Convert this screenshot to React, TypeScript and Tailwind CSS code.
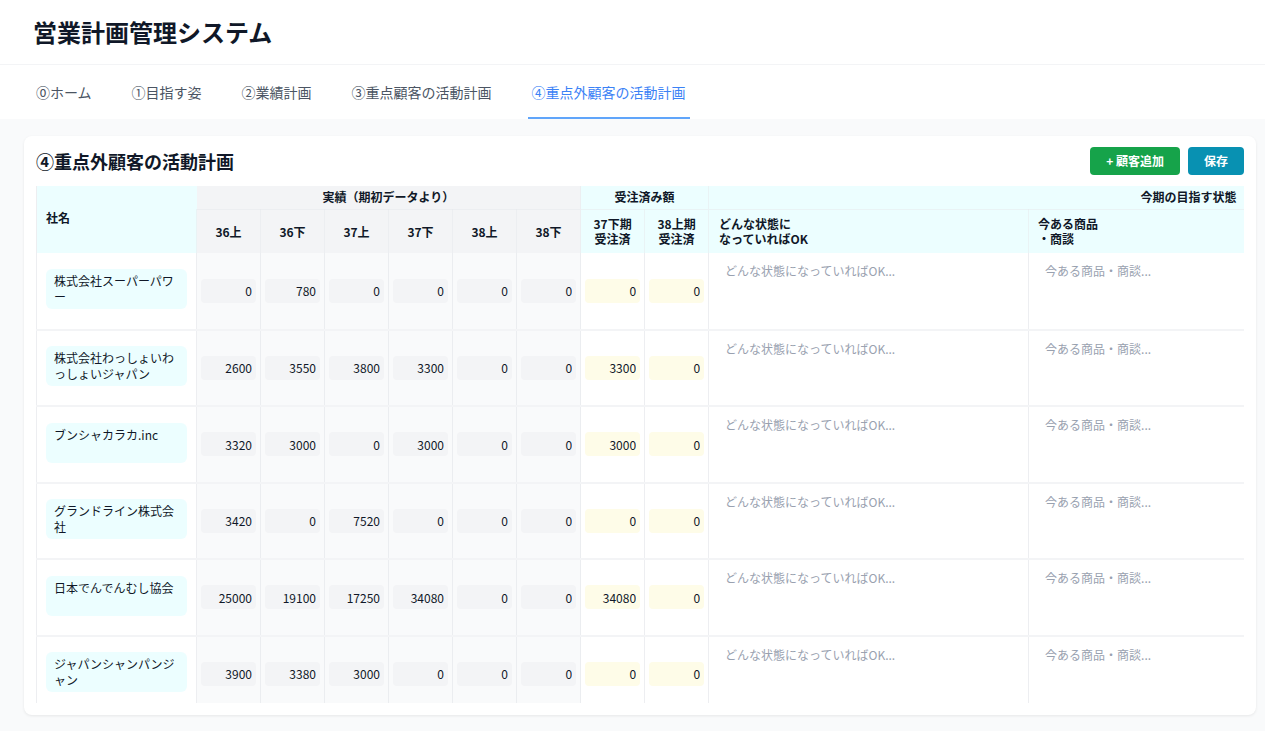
import React from "react";

const TABS = [
  "⓪ホーム",
  "①目指す姿",
  "②業績計画",
  "③重点顧客の活動計画",
  "④重点外顧客の活動計画",
];

const PERIODS = ["36上", "36下", "37上", "37下", "38上", "38下"];

const ROWS: { name: string; results: number[]; orders: number[] }[] = [
  { name: "株式会社スーパーパワー", results: [0, 780, 0, 0, 0, 0], orders: [0, 0] },
  { name: "株式会社わっしょいわっしょいジャパン", results: [2600, 3550, 3800, 3300, 0, 0], orders: [3300, 0] },
  { name: "ブンシャカラカ.inc", results: [3320, 3000, 0, 3000, 0, 0], orders: [3000, 0] },
  { name: "グランドライン株式会社", results: [3420, 0, 7520, 0, 0, 0], orders: [0, 0] },
  { name: "日本でんでんむし協会", results: [25000, 19100, 17250, 34080, 0, 0], orders: [34080, 0] },
  { name: "ジャパンシャンパンジャン", results: [3900, 3380, 3000, 0, 0, 0], orders: [0, 0] },
];

function NumCell({ value, tone }: { value: number; tone: "gray" | "yellow" }) {
  return (
    <td
      className={`border-l border-gray-200/70 px-1 align-middle ${
        tone === "gray" ? "bg-gray-50" : "bg-white"
      }`}
    >
      <input
        readOnly
        value={value}
        className={`h-6 w-full rounded-sm pr-1 text-right text-xs text-gray-900 outline-none ${
          tone === "gray" ? "bg-gray-100" : "bg-yellow-50"
        }`}
      />
    </td>
  );
}

export default function App() {
  return (
    <div
      className="h-[731px] overflow-hidden bg-gray-50 text-gray-900"
      style={{ fontFamily: '"Noto Sans CJK JP", "Noto Sans", sans-serif' }}
    >
      <header className="border-b border-gray-100 bg-white px-[33px] py-4">
        <h1 className="text-2xl leading-8 font-bold">営業計画管理システム</h1>
      </header>

      <nav className="flex h-[54px] items-stretch gap-8 bg-white px-8">
        {TABS.map((t, i) => {
          const active = i === TABS.length - 1;
          return (
            <div
              key={t}
              className={`flex items-center border-b-2 px-1 pt-[1px] text-sm ${
                active
                  ? "border-[#60a5fa] text-[#3b82f6]"
                  : "border-transparent text-[#4b5563]"
              }`}
            >
              {t}
            </div>
          );
        })}
      </nav>

      <main className="pt-[17px] pr-[9px] pl-6">
        <section className="rounded-lg bg-white px-3 pt-[11px] pb-3 shadow-[0_1px_3px_rgba(0,0,0,0.08)]">
          <div className="mb-[11px] flex items-center justify-between">
            <h2 className="text-lg leading-7 font-bold">④重点外顧客の活動計画</h2>
            <div className="flex gap-2">
              <button
                type="button"
                className="h-7 rounded bg-[#16a34a] px-4 text-xs font-semibold text-white"
              >
                + 顧客追加
              </button>
              <button
                type="button"
                className="h-7 rounded bg-[#0891b2] px-4 text-xs font-semibold text-white"
              >
                保存
              </button>
            </div>
          </div>

          <div className="h-[517px] overflow-hidden">
            <table className="w-[1208px] table-fixed border-collapse border-l border-gray-200/70 text-xs">
              <colgroup>
                <col className="w-[160px]" />
                {PERIODS.map((p) => (
                  <col key={p} className="w-16" />
                ))}
                <col className="w-16" />
                <col className="w-16" />
                <col className="w-[320px]" />
                <col className="w-[216px]" />
              </colgroup>
              <thead>
                <tr className="h-[23px]">
                  <th rowSpan={2} className="bg-cyan-50 pb-[3px] pl-[9px] text-left font-semibold">
                    社名
                  </th>
                  <th colSpan={6} className="border-b border-gray-200/50 bg-gray-100 text-center font-semibold">
                    実績（期初データより）
                  </th>
                  <th colSpan={2} className="border-b border-l border-gray-200/50 bg-cyan-50 text-center font-semibold">
                    受注済み額
                  </th>
                  <th colSpan={2} className="border-b border-l border-gray-200/50 bg-cyan-50 pr-2 text-right font-semibold">
                    今期の目指す状態
                  </th>
                </tr>
                <tr className="h-[44px]">
                  {PERIODS.map((p) => (
                    <th key={p} className="border-l border-gray-200/50 bg-gray-100 pt-[1px] text-center font-semibold">
                      {p}
                    </th>
                  ))}
                  <th className="border-l border-gray-200/50 bg-cyan-50 text-center leading-[15px] font-semibold">
                    37下期
                    <br />
                    受注済
                  </th>
                  <th className="border-l border-gray-200/50 bg-cyan-50 text-center leading-[15px] font-semibold">
                    38上期
                    <br />
                    受注済
                  </th>
                  <th className="border-l border-gray-200/50 bg-cyan-50 pl-[10px] text-left leading-[15px] font-semibold">
                    どんな状態に
                    <br />
                    なっていればOK
                  </th>
                  <th className="border-l border-gray-200/50 bg-cyan-50 pl-[9px] text-left leading-[15px] font-semibold">
                    今ある商品
                    <br />
                    ・商談
                  </th>
                </tr>
              </thead>
              <tbody>
                {ROWS.map((r) => (
                  <tr key={r.name} className="h-[76.5px] border-b-2 border-gray-100">
                    <td className="px-[9px] pb-[3px] align-middle">
                      <textarea
                        readOnly
                        rows={2}
                        value={r.name}
                        className="block h-10 w-full resize-none overflow-hidden rounded-md bg-cyan-50 px-2 py-1 text-xs leading-4 text-gray-900 outline-none"
                      />
                    </td>
                    {r.results.map((v, i) => (
                      <NumCell key={i} value={v} tone="gray" />
                    ))}
                    {r.orders.map((v, i) => (
                      <NumCell key={i} value={v} tone="yellow" />
                    ))}
                    <td className="border-l border-gray-200/70 px-2 py-1.5 align-top">
                      <textarea
                        readOnly
                        placeholder="どんな状態になっていればOK..."
                        className="block h-[60px] w-full resize-none px-2 py-1 text-xs leading-4 outline-none placeholder:text-gray-400"
                      />
                    </td>
                    <td className="border-l border-gray-200/70 px-2 py-1.5 align-top">
                      <textarea
                        readOnly
                        placeholder="今ある商品・商談..."
                        className="block h-[60px] w-full resize-none px-2 py-1 text-xs leading-4 outline-none placeholder:text-gray-400"
                      />
                    </td>
                  </tr>
                ))}
              </tbody>
            </table>
          </div>
        </section>
      </main>
    </div>
  );
}
